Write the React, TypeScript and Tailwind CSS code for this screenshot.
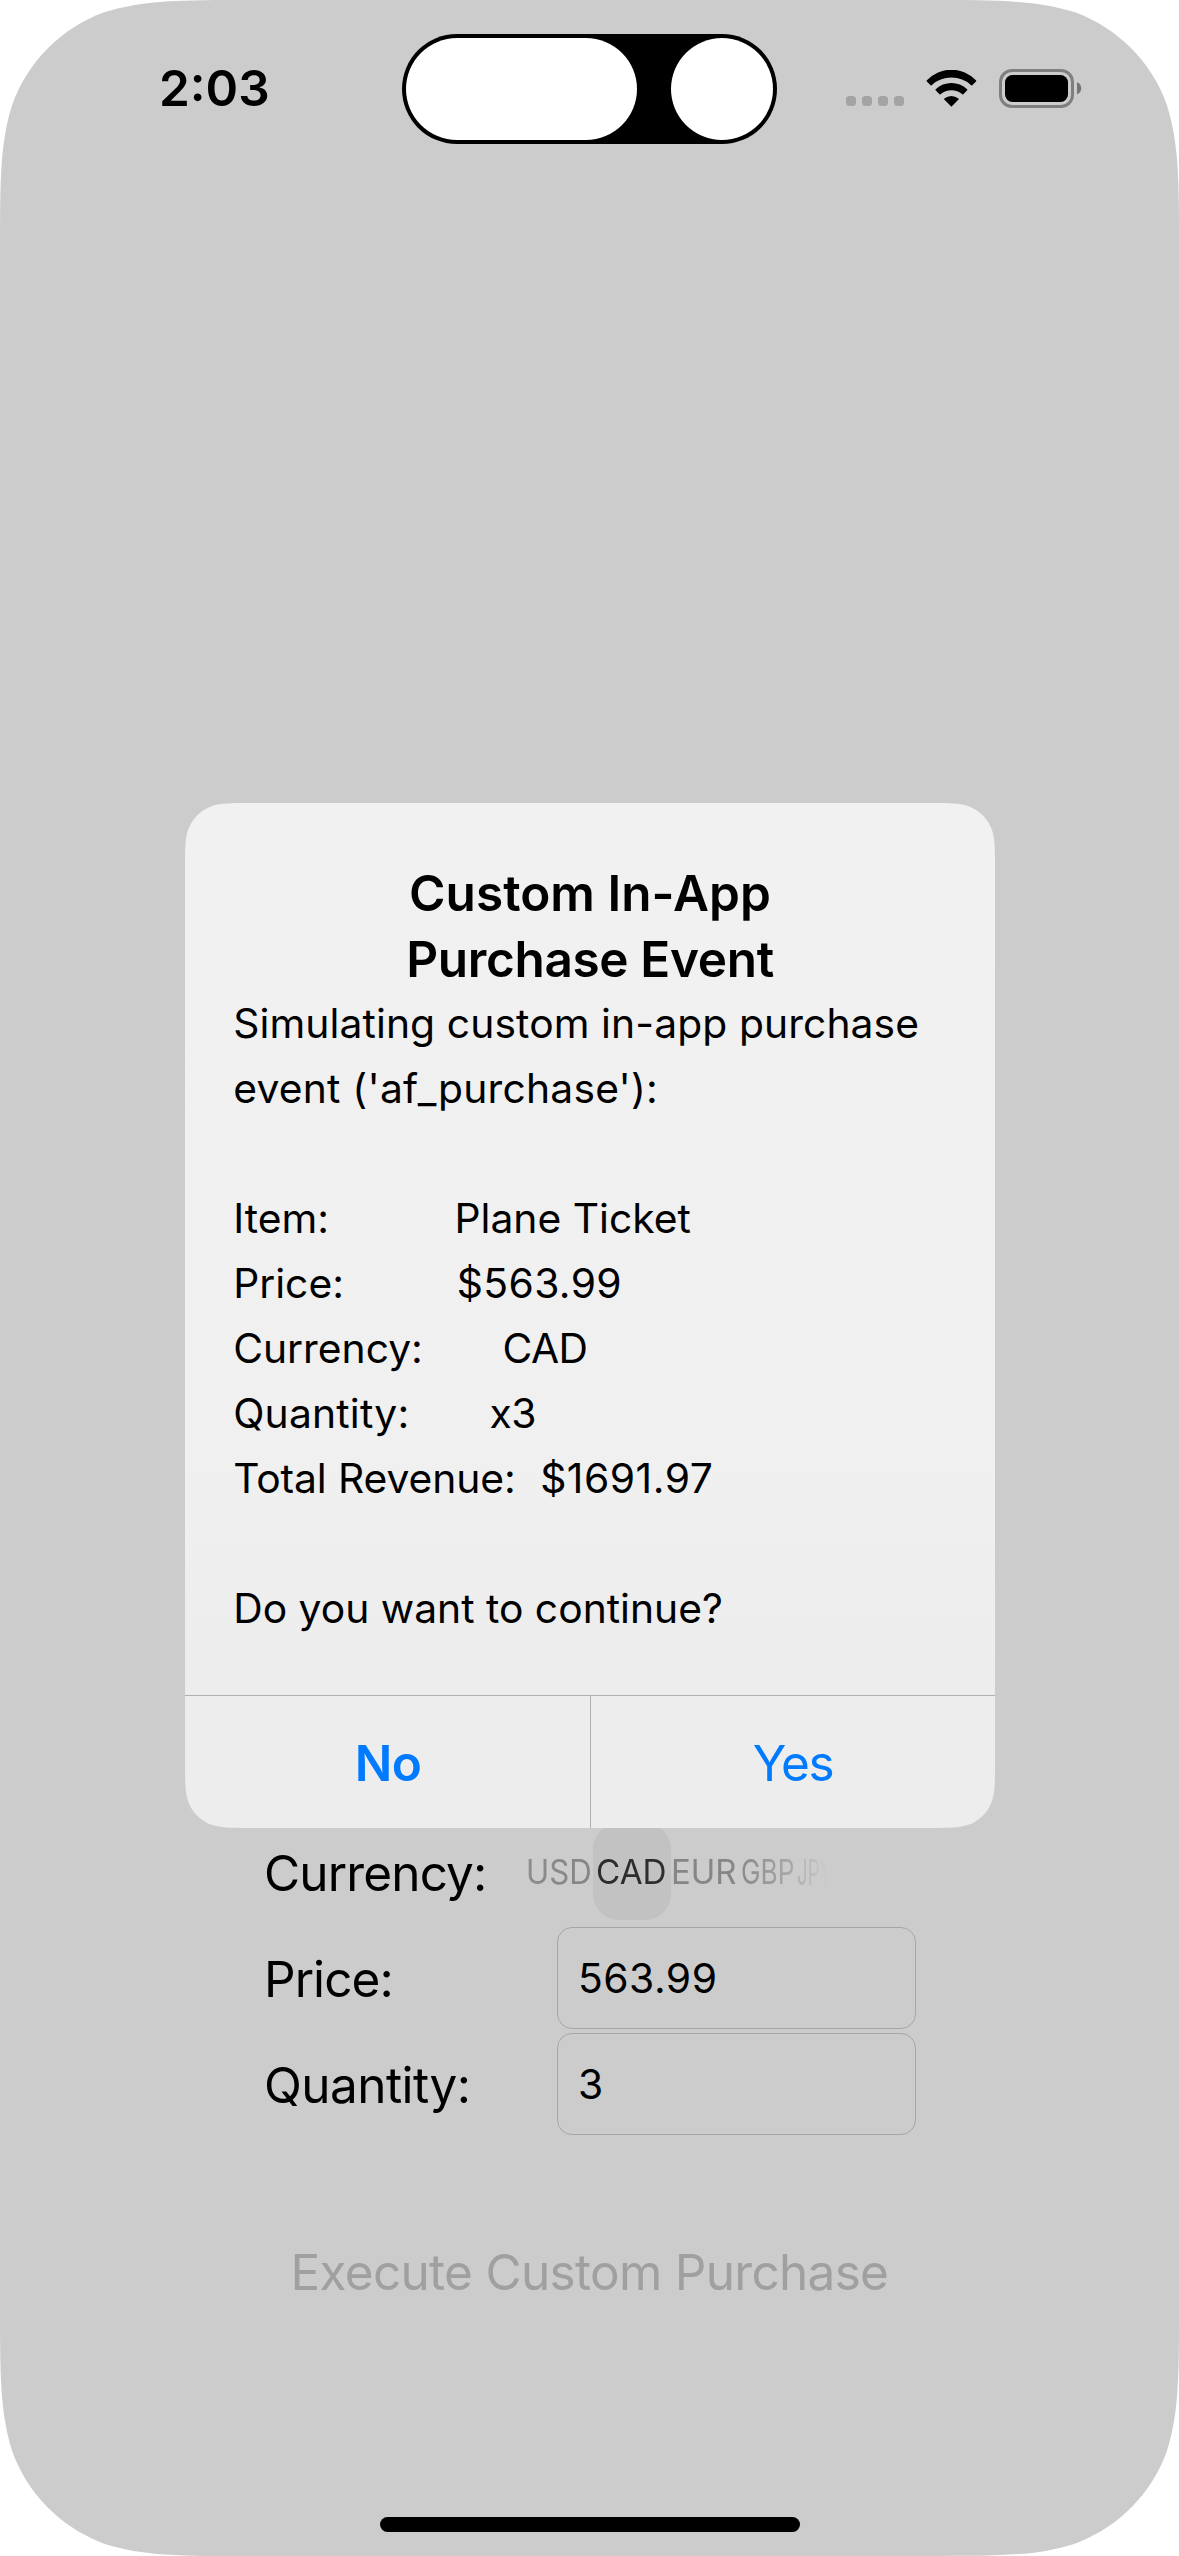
import React from 'react';

// Continuous ("squircle") corner outline used by iOS surfaces.
function continuousRect(w: number, h: number, r: number) {
  const a = 1.528665 * r;
  const b = 1.08849296 * r;
  const c = 0.86840694 * r;
  const d = 0.63149379 * r;
  const e = 0.37282383 * r;
  const f = 0.16905956 * r;
  const g = 0.07491139 * r;
  const d1 = `M${a} 0 L${w - a} 0 C${w - b} 0 ${w - c} 0 ${w - d} ${g} C${w - e} ${f} ${w - f} ${e} ${w - g} ${d} C${w} ${c} ${w} ${b} ${w} ${a}`;
  const d2 = `L${w} ${h - a} C${w} ${h - b} ${w} ${h - c} ${w - g} ${h - d} C${w - f} ${h - e} ${w - e} ${h - f} ${w - d} ${h - g} C${w - c} ${h} ${w - b} ${h} ${w - a} ${h}`;
  const d3 = `L${a} ${h} C${b} ${h} ${c} ${h} ${d} ${h - g} C${e} ${h - f} ${f} ${h - e} ${g} ${h - d} C0 ${h - c} 0 ${h - b} 0 ${h - a}`;
  const d4 = `L0 ${a} C0 ${b} 0 ${c} ${g} ${d} C${f} ${e} ${e} ${f} ${d} ${g} C${c} 0 ${b} 0 ${a} 0 Z`;
  return `path('${d1} ${d2} ${d3} ${d4}')`;
}

function WifiIcon() {
  return (
    <svg className="ml-[22px] h-[37px] w-[51px]" viewBox="0 0 51 37" fill="#000">
      <path d="M0.9 10.3 A33.6 33.6 0 0 1 49.9 10.3 Q50.5 10.8 50 11.4 L46.2 15.2 Q45.8 15.7 45.2 15.2 A29.4 29.4 0 0 0 25.4 7.6 A29.4 29.4 0 0 0 5.6 15.2 Q5 15.7 4.6 15.2 L0.8 11.4 Q0.3 10.8 0.9 10.3 Z" />
      <path d="M9.7 19.2 A22.7 22.7 0 0 1 41.1 19.2 Q41.7 19.8 41.2 20.3 L37.3 24.3 Q36.8 24.7 36.3 24.3 A17 17 0 0 0 14.5 24.3 Q14 24.7 13.5 24.3 L9.6 20.3 Q9.1 19.8 9.7 19.2 Z" />
      <path d="M18.4 28.4 A11 11 0 0 1 32.4 28.4 Q33 28.9 32.5 29.5 L25.9 36.3 Q25.4 36.8 24.9 36.3 L18.3 29.5 Q17.8 28.9 18.4 28.4 Z" />
    </svg>
  );
}

function BatteryIcon() {
  return (
    <svg className="ml-[22px] h-[39px] w-[83px]" viewBox="0 0 83 39">
      <rect x="1.5" y="1.5" width="72" height="36" rx="11.5" fill="none" stroke="#7f7f7f" strokeWidth="3" />
      <rect x="6" y="6" width="63" height="27" rx="7.5" fill="#000" />
      <path d="M78 13.2 Q82.2 15 82.2 19.3 Q82.2 23.6 78 25.4 Z" fill="#757575" />
    </svg>
  );
}

function StatusBar() {
  return (
    <header className="flex h-[177px] items-center">
      <div className="ml-[159px] w-[243px] pb-px text-[49.5px] leading-[66px] font-semibold">2:03</div>
      <div className="flex h-[110px] w-[375px] items-center justify-between rounded-full bg-black px-[4px]">
        <div className="h-[102px] w-[231px] rounded-full bg-white" />
        <div className="size-[102px] rounded-full bg-white" />
      </div>
      <div className="mt-[25px] ml-[69px] flex gap-[6px]">
        {[0, 1, 2, 3].map((i) => (
          <span key={i} className="size-[10px] rounded-[3.5px] bg-[#a3a3a3]" />
        ))}
      </div>
      <WifiIcon />
      <BatteryIcon />
    </header>
  );
}

function CurrencyPicker() {
  return (
    <div className="mt-px flex h-[97px] w-[320px] items-center self-start text-[33.7px] leading-[44px] text-[#868686] [mask-image:linear-gradient(to_right,rgba(0,0,0,0.9)_0px,#000_50px,#000_205px,rgba(0,0,0,0.9)_220px,rgba(0,0,0,0.5)_264px,rgba(0,0,0,0.36)_274px,rgba(0,0,0,0.03)_300px,transparent_302px)]">
      <div className="w-[67px]">
        <span className="inline-block origin-left scale-x-[0.925]">USD</span>
      </div>
      <div className="flex h-[97px] w-[78px] items-center rounded-[26px] bg-[#c2c2c2] pl-[3px] text-[#2d2d2d]">
        <span className="inline-block origin-left scale-x-[0.987]">CAD</span>
      </div>
      <div className="w-[70px] text-[34px]">
        <span className="inline-block origin-left scale-x-[0.97]">EUR</span>
      </div>
      <div className="w-[56px] text-[34.5px]">
        <span className="inline-block origin-left scale-x-[0.76]">GBP</span>
      </div>
      <div className="w-[40px] text-[36px]">
        <span className="inline-block origin-left scale-x-[0.52]">JPY</span>
      </div>
    </div>
  );
}

const fieldClass =
  'flex h-[102px] w-[359px] items-center rounded-[15px] border border-[#a6a6a6] pl-[20px] text-[40.8px] leading-[50px]';

function PurchaseForm() {
  return (
    <main className="mt-[1645px] pl-[264px] text-[49.5px] leading-[66px] whitespace-nowrap">
      <div className="mb-[3px] flex h-[102px] items-center">
        <div className="w-[262px] tracking-[-0.85px]">Currency:</div>
        <CurrencyPicker />
      </div>
      <div className="mb-[4px] flex h-[102px] items-center">
        <div className="w-[293px] pt-[2px] tracking-[-0.95px]">Price:</div>
        <div className={fieldClass}>
          <span className="tracking-[0.5px]">563.99</span>
        </div>
      </div>
      <div className="flex h-[102px] items-center">
        <div className="w-[293px] pt-px tracking-[-0.57px]">Quantity:</div>
        <div className={fieldClass}>3</div>
      </div>
      <button className="mt-[104px] ml-[26.5px] block tracking-[-0.7px] text-[#a0a0a0]">Execute Custom Purchase</button>
    </main>
  );
}

function PurchaseAlert() {
  return (
    <div
      className="absolute top-[803px] left-[185px] flex h-[1025px] w-[810px] flex-col bg-[linear-gradient(to_bottom,#f1f1f1_0%,#f0f0f0_65%,#ededed_84%,#ededed_100%)] pt-[57px] whitespace-nowrap"
      style={{ clipPath: continuousRect(810, 1025, 42) }}
    >
      <h1 className="text-center text-[49.5px] leading-[66px] font-semibold">
        <span className="block tracking-[0.05px]">Custom In-App</span>
        <span className="block tracking-[-0.35px]">Purchase Event</span>
      </h1>
      <div className="-mt-px pl-[48.2px] text-[40.8px] leading-[65.05px]">
        <p className="tracking-[0.1px]">Simulating custom in-app purchase</p>
        <p className="tracking-[0.22px]">event ('af_purchase'):</p>
        <dl className="mt-[65px]">
          <div className="flex">
            <dt className="w-[221.3px]">Item:</dt>
            <dd>Plane Ticket</dd>
          </div>
          <div className="flex">
            <dt className="w-[223.5px]">Price:</dt>
            <dd className="tracking-[0.39px]">$563.99</dd>
          </div>
          <div className="flex">
            <dt className="w-[269.3px]">Currency:</dt>
            <dd className="tracking-[-0.58px]">CAD</dd>
          </div>
          <div className="flex">
            <dt className="w-[256.3px] tracking-[0.2px]">Quantity:</dt>
            <dd className="tracking-[-0.57px]">x3</dd>
          </div>
          <div className="flex">
            <dt className="w-[307px] tracking-[-0.1px]">Total Revenue:</dt>
            <dd className="tracking-[0.51px]">$1691.97</dd>
          </div>
        </dl>
        <p className="mt-[65px]">Do you want to continue?</p>
      </div>
      <div className="mt-auto flex h-[133px] border-t border-[#b0b0b0] text-[49.5px] leading-[66px] text-[#007aff]">
        <button className="w-[405px] pt-[2px] pl-px font-semibold tracking-[-0.58px]">No</button>
        <button className="w-[405px] border-l border-[#b0b0b0] pt-[2px] tracking-[-1.43px]">Yes</button>
      </div>
    </div>
  );
}

export default function App() {
  return (
    <div className="h-[2556px] w-[1179px] bg-white">
      <div
        className="relative flex h-[2556px] w-[1179px] flex-col overflow-hidden bg-[#cccccc] font-['Inter',sans-serif] text-black"
        style={{ clipPath: continuousRect(1179, 2556, 165) }}
      >
        <StatusBar />
        <PurchaseForm />
        <div className="mt-auto mb-[24px] h-[15px] w-[420px] self-center rounded-full bg-black" />
        <PurchaseAlert />
      </div>
    </div>
  );
}
